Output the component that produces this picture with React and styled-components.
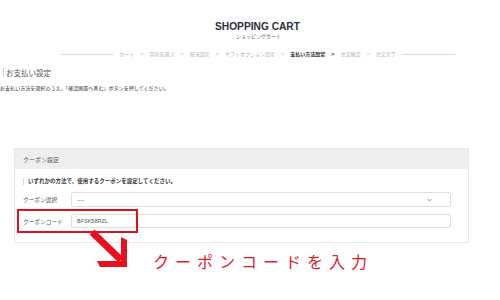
import React from "react";
import styled, { createGlobalStyle } from "styled-components";

const Global = createGlobalStyle`
  html, body { margin: 0; padding: 0; background: #fff; }
  body {
    width: 500px; height: 300px; overflow: hidden;
    font-family: "Noto Sans CJK JP", "Noto Sans", sans-serif;
    color: #444;
  }
  * { box-sizing: border-box; }
`;

const Page = styled.div`
  position: relative;
  width: 500px;
  height: 300px;
  display: flex;
  flex-direction: column;
`;

const Header = styled.header`
  display: flex;
  flex-direction: column;
  align-items: center;
  padding-top: 21px;
`;

const Title = styled.h1`
  margin: 0 0 0 15px;
  font-family: "Liberation Sans", Arial, sans-serif;
  font-weight: 700;
  font-size: 10.2px;
  line-height: 12px;
  color: #2e2e3a;
`;

const Subtitle = styled.div`
  margin-left: 17px;
  font-size: 5px;
  line-height: 6px;
  color: #666;
`;

const Steps = styled.nav`
  display: flex;
  align-items: center;
  margin-top: 11px;
  margin-left: 15px;
  gap: 6px;
  height: 8px;
`;

const Line = styled.span`
  display: block;
  width: 53px;
  height: 1px;
  background: #dcdcdc;
`;

const Step = styled.span`
  font-size: 5px;
  line-height: 8px;
  white-space: nowrap;
  color: ${(p) => (p.$active ? "#222" : "#b0b0b0")};
  font-weight: ${(p) => (p.$active ? 700 : 400)};
`;

const Sep = styled.span`
  font-family: "Liberation Sans", Arial, sans-serif;
  font-size: 5.5px;
  line-height: 8px;
  color: ${(p) => (p.$dark ? "#333" : "#bbb")};
  font-weight: ${(p) => (p.$dark ? 700 : 400)};
`;

const SectionTitle = styled.h2`
  margin: 10px 0 0 3px;
  padding-left: 2px;
  border-left: 1px solid #cfcfcf;
  font-size: 7.5px;
  line-height: 9px;
  font-weight: 400;
  color: #555;
`;

const Description = styled.p`
  margin: 7px 0 0 0;
  font-size: 5.05px;
  line-height: 7px;
  color: #333;
  white-space: nowrap;
`;

const Panel = styled.section`
  margin: 57px 0 0 14px;
  width: 455px;
  border: 1px solid #e8e8e8;
  background: #fff;
`;

const PanelHead = styled.div`
  height: 20px;
  background: #efefef;
  display: flex;
  align-items: center;
  padding-left: 8px;
  font-size: 6px;
  color: #555;
`;

const PanelBody = styled.div`
  padding: 9px 8px 14px 8px;
  display: flex;
  flex-direction: column;
`;

const Note = styled.div`
  border-left: 1px solid #d5d5d5;
  padding-left: 4px;
  font-size: 5.5px;
  line-height: 7px;
  font-weight: 700;
  color: #333;
  white-space: nowrap;
`;

const Row = styled.div`
  display: flex;
  align-items: center;
  margin-top: ${(p) => p.$mt}px;
`;

const Label = styled.div`
  width: 48px;
  font-size: 5.7px;
  color: #555;
  white-space: nowrap;
`;

const Field = styled.div`
  flex: 1;
  margin-right: 9px;
  height: ${(p) => p.$h}px;
  border: 1px solid #dedede;
  border-radius: 2px;
  display: flex;
  align-items: center;
  justify-content: space-between;
  padding: 0 18px 0 5px;
  font-family: "Liberation Sans", Arial, sans-serif;
  font-size: 5.5px;
  color: #555;
`;

const Chevron = styled.svg`
  width: 5px;
  height: 4px;
`;

const Highlight = styled.div`
  position: absolute;
  left: 17px;
  top: 209px;
  width: 121px;
  height: 24px;
  border: 2px solid #e0101f;
`;

const Arrow = styled.svg`
  position: absolute;
  left: 88px;
  top: 229px;
  width: 44px;
  height: 42px;
`;

const Callout = styled.div`
  margin: 8px 0 0 153px;
  font-family: "Noto Sans CJK JP", sans-serif;
  font-weight: 400;
  font-size: 16px;
  line-height: 20px;
  letter-spacing: 6px;
  color: #dc1a2c;
  white-space: nowrap;
`;

const steps = ["カート", "目的を選ぶ", "配送設定", "ギフトオプション設定", "支払い方法設定", "注文確認", "注文完了"];
const ACTIVE = 4;

export default function App() {
  return (
    <Page>
      <Global />
      <Header>
        <Title>SHOPPING CART</Title>
        <Subtitle>ショッピングカート</Subtitle>
        <Steps>
          <Line />
          {steps.map((s, i) => (
            <React.Fragment key={s}>
              <Step $active={i === ACTIVE}>{s}</Step>
              {i < steps.length - 1 && <Sep $dark={i === ACTIVE}>&gt;</Sep>}
            </React.Fragment>
          ))}
          <Line />
        </Steps>
      </Header>
      <SectionTitle>お支払い設定</SectionTitle>
      <Description>お支払い方法を選択のうえ、「確認画面へ進む」ボタンを押してください。</Description>
      <Panel>
        <PanelHead>クーポン設定</PanelHead>
        <PanelBody>
          <Note>いずれかの方法で、使用するクーポンを設定してください。</Note>
          <Row $mt={7}>
            <Label>クーポン選択</Label>
            <Field $h={15}>
              <span>----</span>
              <Chevron viewBox="0 0 10 8">
                <path d="M1 2 L5 6 L9 2" fill="none" stroke="#777" strokeWidth="1.6" />
              </Chevron>
            </Field>
          </Row>
          <Row $mt={7}>
            <Label>クーポンコード</Label>
            <Field $h={14}>
              <span>BFSK58RZL</span>
            </Field>
          </Row>
        </PanelBody>
      </Panel>
      <Callout>クーポンコードを入力</Callout>
      <Highlight />
      <Arrow viewBox="0 0 44 42">
        <path d="M4 3 L33 31" stroke="#e8101e" strokeWidth="7" fill="none" />
        <polygon points="9,32 33,32 33,8 39,11 39,38 12,38" fill="#e8101e" />
      </Arrow>
    </Page>
  );
}
